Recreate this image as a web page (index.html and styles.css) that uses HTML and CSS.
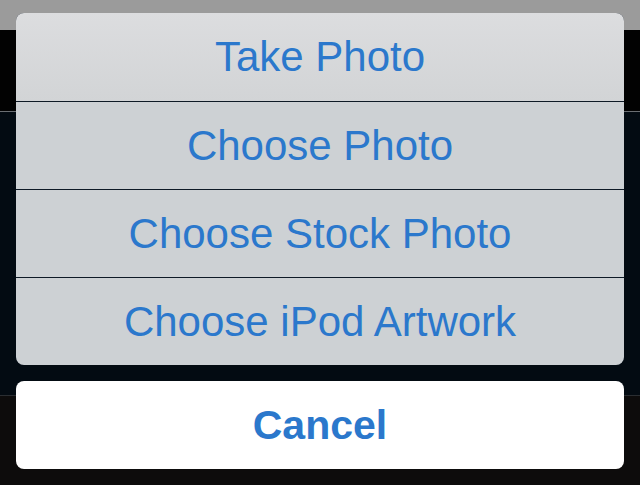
FILE: index.html
```html
<!DOCTYPE html>
<html>
<head>
<meta charset="utf-8">
<link rel="stylesheet" href="styles.css">
</head>
<body>
<div class="screen">
  <div class="backdrop">
    <div class="bar-top"></div>
    <div class="bar-nav"></div>
    <div class="bar-line"></div>
    <div class="bar-content"></div>
    <div class="bar-line2"></div>
    <div class="bar-bottom"></div>
  </div>
  <div class="sheet">
    <div class="group">
      <div class="item first">Take Photo</div>
      <div class="item">Choose Photo</div>
      <div class="item">Choose Stock Photo</div>
      <div class="item">Choose iPod Artwork</div>
    </div>
    <div class="cancel">Cancel</div>
  </div>
</div>
</body>
</html>
```
FILE: styles.css
```css
html, body {
  margin: 0;
  padding: 0;
  background: #0c0b0b;
}
.screen {
  position: relative;
  width: 640px;
  height: 485px;
  overflow: hidden;
  font-family: "Liberation Sans", Arial, sans-serif;
}
.backdrop {
  display: flex;
  flex-direction: column;
  height: 100%;
}
.bar-top { height: 30px; background: #9b9b9b; }
.bar-nav { height: 81px; background: #020202; }
.bar-line { height: 1px; background: #6a6e72; }
.bar-content { height: 283px; background: #030b12; }
.bar-line2 { height: 1px; background: #2a2e32; }
.bar-bottom { flex: 1; background: #0d0c0c; }

.sheet {
  position: absolute;
  left: 16px;
  top: 13px;
  width: 608px;
  display: flex;
  flex-direction: column;
  gap: 16px;
}
.group {
  border-radius: 8px;
  overflow: hidden;
  display: flex;
  flex-direction: column;
  gap: 1px;
  background: #0e1a26;
}
.item {
  height: 87px;
  display: flex;
  align-items: center;
  justify-content: center;
  background: #cdd1d4;
  color: #2b78cc;
  font-size: 42px;
}
.item.first {
  height: 88px;
  background: linear-gradient(#dcdddf, #d2d4d6);
}
.cancel {
  height: 88px;
  border-radius: 8px;
  background: #ffffff;
  display: flex;
  align-items: center;
  justify-content: center;
  color: #2b78cc;
  font-size: 41px;
  font-weight: 700;
}
```
